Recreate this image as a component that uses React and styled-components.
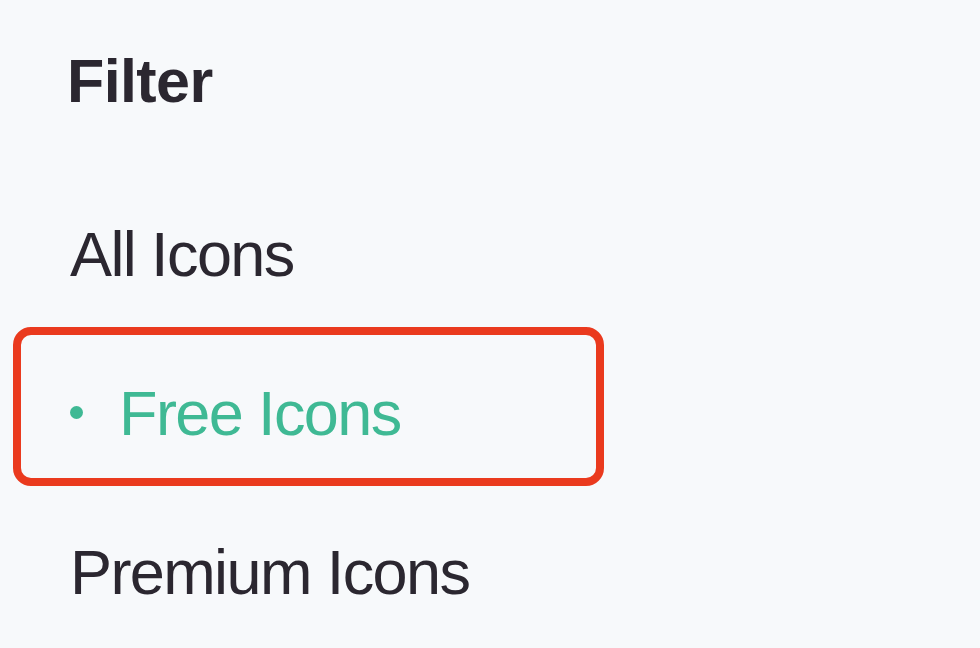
import React from "react";
import styled, { createGlobalStyle } from "styled-components";

const GlobalStyle = createGlobalStyle`
  html, body {
    margin: 0;
    padding: 0;
    background: #f7f9fb;
  }
  body {
    font-family: "Liberation Sans", Arial, sans-serif;
    color: #2b2730;
  }
`;

const Panel = styled.aside`
  width: 980px;
  height: 648px;
  overflow: hidden;
  background: #f7f9fb;
`;

const Heading = styled.h2`
  box-sizing: border-box;
  height: 168px;
  margin: 0;
  padding: 51px 0 0 67px;
  font-size: 61px;
  line-height: 61px;
  font-weight: 700;
  letter-spacing: -0.6px;
  color: #2b2730;
`;

const List = styled.ul`
  list-style: none;
  margin: 0;
  padding: 0;
`;

const Item = styled.li`
  box-sizing: border-box;
  width: 591px;
  height: 159px;
  margin-left: 13px;
  padding: 47px 0 0 49px;
  border: 8px solid ${(p) => (p.$active ? "#ea3a1e" : "transparent")};
  border-radius: 18px;
  display: flex;
  align-items: flex-start;
`;

const Label = styled.span`
  display: flex;
  align-items: center;
  gap: 36px;
  font-size: 63px;
  line-height: 63px;
  letter-spacing: -1.6px;
  color: ${(p) => (p.$active ? "#3fb994" : "#2b2730")};
`;

const Dot = styled.span`
  width: 13px;
  height: 13px;
  margin-top: -2px;
  border-radius: 50%;
  background: #3fb994;
  flex-shrink: 0;
`;

const filters = [
  { id: "all", label: "All Icons" },
  { id: "free", label: "Free Icons", active: true },
  { id: "premium", label: "Premium Icons" },
];

export default function App() {
  return (
    <>
      <GlobalStyle />
      <Panel>
        <Heading>Filter</Heading>
        <List>
          {filters.map((f) => (
            <Item key={f.id} $active={f.active}>
              <Label $active={f.active}>
                {f.active && <Dot />}
                {f.label}
              </Label>
            </Item>
          ))}
        </List>
      </Panel>
    </>
  );
}
